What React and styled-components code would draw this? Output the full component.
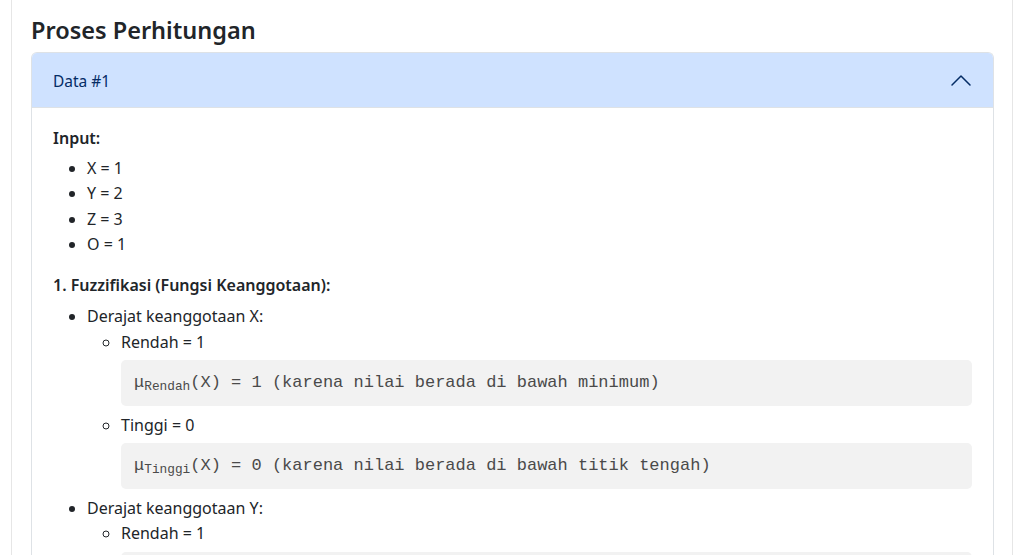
import styled, { createGlobalStyle } from "styled-components"

const GlobalStyle = createGlobalStyle`
  html, body {
    margin: 0;
    background: #ffffff;
    font-family: "Noto Sans", "Open Sans", sans-serif;
    color: #212529;
  }
`

const Page = styled.div`
  padding: 0 11px;
`

const Card = styled.section`
  border-left: 1px solid #e6e6e6;
  border-right: 1px solid #e6e6e6;
  padding: 15px 18px 0 19px;
  min-height: 555px;
  box-sizing: border-box;
`

const Title = styled.h2`
  margin: 0 0 6px;
  font-size: 23.5px;
  font-weight: 600;
  line-height: 31px;
  color: #212529;
`

const Accordion = styled.div`
  border: 1px solid #dee2e6;
  border-bottom: none;
  border-radius: 6px 6px 0 0;
  overflow: hidden;
`

const Header = styled.button`
  display: flex;
  align-items: center;
  justify-content: space-between;
  width: 100%;
  height: 55px;
  padding: 1px 20px 0 21px;
  border: none;
  border-bottom: 1px solid #dee2e6;
  background: #cfe2ff;
  color: #052c65;
  font-family: inherit;
  font-size: 15.5px;
  text-align: left;
  box-sizing: border-box;
`

const Body = styled.div`
  padding: 18px 21px 0 21px;
  font-size: 16px;
  line-height: 25.5px;
`

const Label = styled.div`
  font-weight: 600;
  margin-bottom: ${(p) => p.$mb || "4px"};
`

const List = styled.ul`
  margin: 0 0 ${(p) => p.$mb || "0"};
  padding-left: 34px;
  list-style-type: ${(p) => (p.$nested ? "circle" : "disc")};
`

const Item = styled.li``

const Code = styled.pre`
  margin: 5px 0 7px;
  padding: 10px 13px;
  background: #f2f2f2;
  border-radius: 5px;
  font-family: "Liberation Mono", "Courier New", monospace;
  font-size: 17px;
  line-height: 25.5px;
  color: #4a4a4a;
  white-space: pre-wrap;

  sub {
    font-size: 12.8px;
    vertical-align: -3px;
    line-height: 0;
  }
`

function Chevron() {
  return (
    <svg width="24" height="24" viewBox="0 0 24 24" fill="none">
      <path d="M3 16 L12 7 L21 16" stroke="#052c65" strokeWidth="1.5" strokeLinecap="round" strokeLinejoin="round" />
    </svg>
  )
}

function Degree({ name, value, note, v }) {
  return (
    <Item>
      {name} = {value}
      <Code>
        μ<sub>{name}</sub>({v}) = {value} ({note})
      </Code>
    </Item>
  )
}

export default function App() {
  return (
    <Page>
      <GlobalStyle />
      <Card>
        <Title>Proses Perhitungan</Title>
        <Accordion>
          <Header>
            Data #1
            <Chevron />
          </Header>
          <Body>
            <Label>Input:</Label>
            <List $mb="15px">
              <Item>X = 1</Item>
              <Item>Y = 2</Item>
              <Item>Z = 3</Item>
              <Item>O = 1</Item>
            </List>
            <Label $mb="6px">1. Fuzzifikasi (Fungsi Keanggotaan):</Label>
            <List>
              <Item>
                Derajat keanggotaan X:
                <List $nested>
                  <Degree name="Rendah" value="1" v="X" note="karena nilai berada di bawah minimum" />
                  <Degree name="Tinggi" value="0" v="X" note="karena nilai berada di bawah titik tengah" />
                </List>
              </Item>
              <Item>
                Derajat keanggotaan Y:
                <List $nested>
                  <Degree name="Rendah" value="1" v="Y" note="karena nilai berada di bawah minimum" />
                </List>
              </Item>
            </List>
          </Body>
        </Accordion>
      </Card>
    </Page>
  )
}
